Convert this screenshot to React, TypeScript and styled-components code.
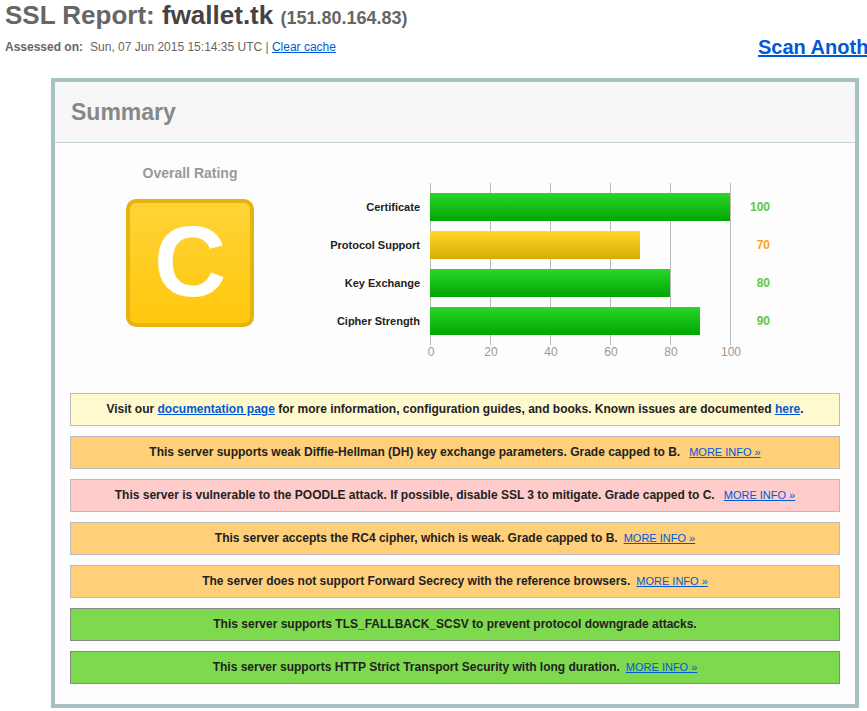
import React from 'react';
import styled, { createGlobalStyle } from 'styled-components';

const GlobalStyle = createGlobalStyle`
  * { box-sizing: border-box; }
  body {
    margin: 0;
    background: #fff;
    color: #222;
    font-family: 'Liberation Sans', Arial, sans-serif;
    font-size: 12px;
    line-height: 15px;
    overflow-x: hidden;
  }
`;

const Link = styled.a`
  color: #0059d6;
  text-decoration: underline;
`;

const Page = styled.main`
  padding-bottom: 3px;
`;

const Title = styled.h1`
  margin: 0;
  padding-left: 5px;
  font-size: 26px;
  line-height: 30px;
  color: #666;
`;

const Host = styled.span`
  color: #444;
`;

const Address = styled.span`
  font-size: 18px;
  line-height: 20px;
`;

const SubHeader = styled.div`
  display: flex;
  justify-content: space-between;
  align-items: center;
  height: 34px;
  padding-left: 5px;
  color: #666;
`;

const Assessed = styled.p`
  margin: 0;

  b {
    margin-right: 7px;
  }
`;

const ScanLink = styled(Link)`
  flex: 0 0 109px;
  overflow: hidden;
  white-space: nowrap;
  font-size: 20px;
  font-weight: bold;
  line-height: 26px;
`;

const Panel = styled.section`
  margin: 14px 8px 0 51px;
  border: 4px solid #a7c1c3;
  background: #fdfdfd;
`;

const PanelTitle = styled.h2`
  margin: 0;
  padding: 15px 16px;
  border-bottom: 1px solid #c3d2cf;
  background: #f7f7f7;
  color: #888;
  font-size: 23px;
  line-height: 30px;
`;

const PanelBody = styled.div`
  padding: 20px 15px;
`;

const Ratings = styled.div`
  display: flex;
  gap: 70px;
  padding-left: 56px;
`;

const Rating = styled.div`
  display: flex;
  flex-direction: column;
  align-items: center;
  gap: 16px;
`;

const RatingLabel = styled.div`
  color: #999;
  font-size: 14px;
  line-height: 20px;
  font-weight: bold;
`;

const Grade = styled.div`
  width: 128px;
  height: 128px;
  border: 4px solid #e6b40f;
  border-radius: 10px;
  background: linear-gradient(#ffd338, #ffc80d);
  color: #fff;
  font-size: 100px;
  line-height: 116px;
  font-weight: bold;
  text-align: center;
`;

const Chart = styled.div`
  display: grid;
  grid-template-columns: 106px 301px 39px;
  padding-top: 20px;
`;

const Column = styled.div`
  display: flex;
  flex-direction: column;
  gap: 10px;
  padding: 10px 0;
  text-align: right;
  font-weight: bold;
  line-height: 28px;
`;

const Labels = styled(Column)`
  padding-right: 10px;
  font-size: 11px;
`;

const Plot = styled(Column)`
  background: repeating-linear-gradient(to right, #bbb 0 1px, transparent 1px 60px);
  padding-right: 1px;
`;

const Bar = styled.div<{ $warn: boolean }>`
  height: 28px;
  background: ${(p) => (p.$warn ? 'linear-gradient(#ffd62b, #d6ad00)' : 'linear-gradient(#2ad62b, #00a600)')};
`;

const Value = styled.div<{ $warn: boolean }>`
  color: ${(p) => (p.$warn ? '#ffa11a' : '#5fc843')};
`;

const Axis = styled.div`
  grid-column: 2;
  display: flex;
  margin: 0 -30px 0 -29px;
  color: #999;
  text-align: center;
`;

const Tick = styled.span`
  flex: 1;
`;

const Notices = styled.div`
  display: flex;
  flex-direction: column;
  gap: 10px;
  margin-top: 33px;
`;

const tones = {
  info: ['#fff9cf', '#bbb'],
  warning: ['#ffcf79', '#bbb'],
  danger: ['#ffcccc', '#bbb'],
  good: ['#7ed94e', '#888'],
};

const Notice = styled.div<{ $tone: keyof typeof tones }>`
  padding: 8px;
  border: 1px solid ${(p) => tones[p.$tone][1]};
  background: ${(p) => tones[p.$tone][0]};
  font-weight: bold;
  text-align: center;
`;

const MoreLink = styled(Link)<{ $wide?: boolean }>`
  margin-left: ${(p) => (p.$wide ? 9 : 6)}px;
  font-size: 11px;
  font-weight: normal;
`;

const scores = [
  { label: 'Certificate', value: 100 },
  { label: 'Protocol Support', value: 70 },
  { label: 'Key Exchange', value: 80 },
  { label: 'Cipher Strength', value: 90 },
];

const notices: { tone: keyof typeof tones; text: string; more?: boolean; wide?: boolean }[] = [
  {
    tone: 'warning',
    text: 'This server supports weak Diffie-Hellman (DH) key exchange parameters. Grade capped to B.',
    more: true,
    wide: true,
  },
  {
    tone: 'danger',
    text: 'This server is vulnerable to the POODLE attack. If possible, disable SSL 3 to mitigate. Grade capped to C.',
    more: true,
    wide: true,
  },
  { tone: 'warning', text: 'This server accepts the RC4 cipher, which is weak. Grade capped to B.', more: true },
  { tone: 'warning', text: 'The server does not support Forward Secrecy with the reference browsers.', more: true },
  { tone: 'good', text: 'This server supports TLS_FALLBACK_SCSV to prevent protocol downgrade attacks.' },
  { tone: 'good', text: 'This server supports HTTP Strict Transport Security with long duration.', more: true },
];

export default function App() {
  return (
    <Page>
      <GlobalStyle />
      <header>
        <Title>
          SSL Report: <Host>fwallet.tk</Host> <Address>(151.80.164.83)</Address>
        </Title>
        <SubHeader>
          <Assessed>
            <b>Assessed on:</b>Sun, 07 Jun 2015 15:14:35 UTC | <Link href="#clear">Clear cache</Link>
          </Assessed>
          <ScanLink href="#scan">Scan Another »</ScanLink>
        </SubHeader>
      </header>
      <Panel>
        <PanelTitle>Summary</PanelTitle>
        <PanelBody>
          <Ratings>
            <Rating>
              <RatingLabel>Overall Rating</RatingLabel>
              <Grade>C</Grade>
            </Rating>
            <Chart>
              <Labels>
                {scores.map((s) => (
                  <div key={s.label}>{s.label}</div>
                ))}
              </Labels>
              <Plot>
                {scores.map((s) => (
                  <Bar key={s.label} $warn={s.value < 80} style={{ width: `${s.value}%` }} />
                ))}
              </Plot>
              <Column>
                {scores.map((s) => (
                  <Value key={s.label} $warn={s.value < 80}>
                    {s.value}
                  </Value>
                ))}
              </Column>
              <Axis>
                {[0, 20, 40, 60, 80, 100].map((n) => (
                  <Tick key={n}>{n}</Tick>
                ))}
              </Axis>
            </Chart>
          </Ratings>
          <Notices>
            <Notice $tone="info">
              Visit our <Link href="#docs">documentation page</Link> for more information, configuration guides, and
              books. Known issues are documented <Link href="#issues">here</Link>.
            </Notice>
            {notices.map((n) => (
              <Notice key={n.text} $tone={n.tone}>
                {n.text}
                {n.more && (
                  <MoreLink href="#more" $wide={n.wide}>
                    MORE INFO »
                  </MoreLink>
                )}
              </Notice>
            ))}
          </Notices>
        </PanelBody>
      </Panel>
    </Page>
  );
}
